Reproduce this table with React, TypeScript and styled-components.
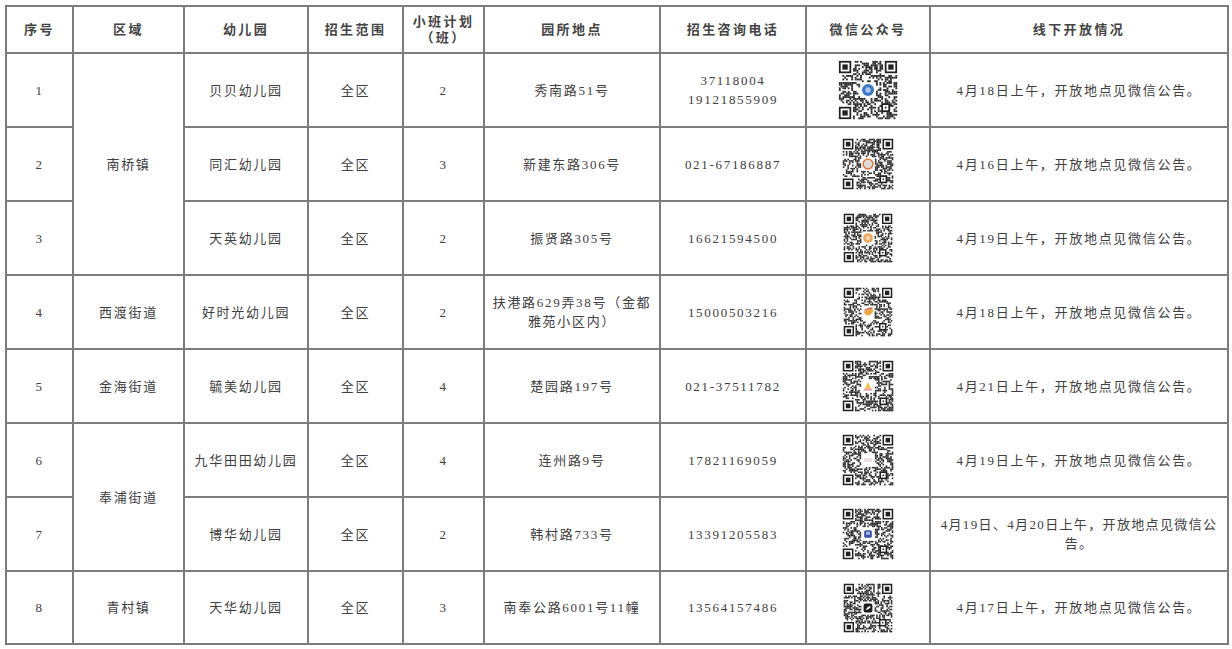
import React from "react";
import styled, { createGlobalStyle } from "styled-components";

const GlobalStyle = createGlobalStyle`
  html, body {
    margin: 0;
    padding: 0;
    background: #ffffff;
  }
  body {
    font-family: "Liberation Serif", "Noto Sans CJK SC", serif;
    color: #3d3d3d;
  }
`;

const Page = styled.div`
  width: 1232px;
  height: 649px;
  padding: 5px 0 0 5px;
  box-sizing: border-box;
  overflow: hidden;
`;

const Table = styled.table`
  width: 1222px;
  border-collapse: collapse;
  table-layout: fixed;
  border: 2px solid #7c7c7c;
`;

const HeadRow = styled.tr`
  height: 47px;
`;

const BodyRow = styled.tr<{ $last?: boolean }>`
  height: ${(p) => (p.$last ? "73px" : "74px")};
`;

const Th = styled.th`
  border: 2px solid #7c7c7c;
  padding: 0 2px;
  font-size: 13px;
  font-weight: 700;
  letter-spacing: 2.4px;
  line-height: 16px;
  color: #444;
  text-align: center;
  vertical-align: middle;
`;

const Td = styled.td<{ $tight?: boolean; $dense?: boolean }>`
  border: 2px solid #7c7c7c;
  padding: ${(p) => (p.$tight ? "0 1px" : "0 4px")};
  font-size: 13px;
  font-weight: 400;
  letter-spacing: ${(p) => (p.$dense ? "1.35px" : "1.7px")};
  white-space: ${(p) => (p.$dense ? "nowrap" : "normal")};
  line-height: 19px;
  color: #404040;
  text-align: center;
  vertical-align: middle;
`;

const QrBox = styled.div`
  display: flex;
  justify-content: center;
  align-items: center;
`;

const QrSvg = styled.svg`
  display: block;
  filter: blur(0.3px);
`;

type Logo = "blueCircle" | "orangeRing" | "orangeDot" | "duck" | "yellow" | "white" | "blueSquare" | "black";

function rng(seed: number) {
  let s = seed * 7919 + 13;
  return () => {
    s = (s * 16807) % 2147483647;
    return (s - 1) / 2147483646;
  };
}

const N = 33;
const C = (N - 1) / 2;

function QrCode({ size, seed, logo }: { size: number; seed: number; logo: Logo }) {
  const rand = rng(seed);
  const cells: React.ReactNode[] = [];
  const inFinder = (r: number, c: number) =>
    (r < 8 && c < 8) || (r < 8 && c >= N - 8) || (r >= N - 8 && c < 8);
  const inLogo = (r: number, c: number) => Math.abs(r - C) <= 4 && Math.abs(c - C) <= 4;
  for (let r = 0; r < N; r++) {
    for (let c = 0; c < N; c++) {
      const v = rand();
      if (inFinder(r, c) || inLogo(r, c)) continue;
      if (v < 0.5) cells.push(<rect key={`${r}-${c}`} x={c} y={r} width={1.05} height={1.05} />);
    }
  }
  const finder = (x: number, y: number) => (
    <g key={`f${x}${y}`}>
      <rect x={x} y={y} width={7} height={7} fill="#222" />
      <rect x={x + 1} y={y + 1} width={5} height={5} fill="#fff" />
      <rect x={x + 2} y={y + 2} width={3} height={3} fill="#222" />
    </g>
  );
  const logoNode = () => {
    switch (logo) {
      case "blueCircle":
        return (
          <g>
            <circle cx={C + 0.5} cy={C + 0.5} r={4} fill="#fff" />
            <circle cx={C + 0.5} cy={C + 0.5} r={3.4} fill="#3f78c8" />
            <circle cx={C + 0.5} cy={C + 0.5} r={1.5} fill="#a9c8ee" />
          </g>
        );
      case "orangeRing":
        return (
          <g>
            <circle cx={C + 0.5} cy={C + 0.5} r={4} fill="#fff" />
            <circle cx={C + 0.5} cy={C + 0.5} r={3.2} fill="#dcdcdc" stroke="#ec6a2c" strokeWidth={0.9} />
          </g>
        );
      case "orangeDot":
        return (
          <g>
            <circle cx={C + 0.5} cy={C + 0.5} r={4} fill="#fff" />
            <circle cx={C + 0.5} cy={C + 0.5} r={3.3} fill="#f0a860" />
            <circle cx={C + 0.5} cy={C + 0.5} r={1.6} fill="#f7d5a6" />
          </g>
        );
      case "duck":
        return (
          <g transform={`translate(${C - 3.5} ${C - 3.5})`}>
            <rect x={0} y={0} width={8} height={8} fill="#fff" />
            <path d="M1 4 Q4 9 7.4 3.6 L7 1 Q4.5 2.6 1 4 Z" fill="#f2a53a" />
            <path d="M1.6 2.6 Q4.2 0.8 7 1 L6.4 2 Q4.3 1.9 1.6 3.5 Z" fill="#e25a4a" />
          </g>
        );
      case "yellow":
        return (
          <g transform={`translate(${C - 3.5} ${C - 3.5})`}>
            <rect x={0} y={0} width={8} height={8} fill="#fff" />
            <path d="M1.5 6.8 L4 1.4 L6.5 6.8 Z" fill="#f3c242" />
            <rect x={1.2} y={5.8} width={5.6} height={1.2} fill="#e7a0b8" />
          </g>
        );
      case "white":
        return (
          <g transform={`translate(${C - 3.5} ${C - 3.5})`}>
            <rect x={0} y={0} width={8} height={8} fill="#fff" />
            <rect x={1.3} y={2.6} width={5.4} height={2.8} rx={0.5} fill="#ebe3e3" />
          </g>
        );
      case "blueSquare":
        return (
          <g transform={`translate(${C - 3.5} ${C - 3.5})`}>
            <rect x={0} y={0} width={8} height={8} fill="#fff" />
            <rect x={1.5} y={1.5} width={5} height={5} rx={1.1} fill="#3c4fa8" />
            <rect x={2.7} y={2.5} width={2.6} height={2} fill="#a4b6e6" />
          </g>
        );
      case "black":
        return (
          <g transform={`translate(${C - 3.5} ${C - 3.5})`}>
            <rect x={0} y={0} width={8} height={8} fill="#fff" />
            <rect x={1} y={1} width={6} height={6} rx={1.3} fill="#1c1c1c" />
            <path d="M2.4 5.6 Q4 2 6 3 Q5 5 2.4 5.6 Z" fill="#fff" />
          </g>
        );
    }
  };
  return (
    <QrSvg width={size} height={size} viewBox={`-0.5 -0.5 ${N + 1} ${N + 1}`}>
      <rect x={-0.5} y={-0.5} width={N + 1} height={N + 1} fill="#fff" />
      <g fill="#2a2a2a">{cells}</g>
      {finder(0, 0)}
      {finder(N - 7, 0)}
      {finder(0, N - 7)}
      <rect x={N - 9} y={N - 9} width={5} height={5} fill="#222" />
      <rect x={N - 8} y={N - 8} width={3} height={3} fill="#fff" />
      <rect x={N - 7} y={N - 7} width={1} height={1} fill="#222" />
      {logoNode()}
    </QrSvg>
  );
}

type Row = {
  no: number;
  area?: { name: string; span: number };
  school: string;
  plan: number;
  address: React.ReactNode;
  phone: React.ReactNode;
  qr: { size: number; seed: number; logo: Logo };
  open: React.ReactNode;
  dense?: boolean;
};

const rows: Row[] = [
  {
    no: 1,
    area: { name: "南桥镇", span: 3 },
    school: "贝贝幼儿园",
    plan: 2,
    address: "秀南路51号",
    phone: (
      <>
        37118004
        <br />
        19121855909
      </>
    ),
    qr: { size: 60, seed: 11, logo: "blueCircle" },
    open: "4月18日上午，开放地点见微信公告。",
  },
  {
    no: 2,
    school: "同汇幼儿园",
    plan: 3,
    address: "新建东路306号",
    phone: "021-67186887",
    qr: { size: 52, seed: 23, logo: "orangeRing" },
    open: "4月16日上午，开放地点见微信公告。",
  },
  {
    no: 3,
    school: "天英幼儿园",
    plan: 2,
    address: "振贤路305号",
    phone: "16621594500",
    qr: { size: 50, seed: 37, logo: "orangeDot" },
    open: "4月19日上午，开放地点见微信公告。",
  },
  {
    no: 4,
    area: { name: "西渡街道", span: 1 },
    school: "好时光幼儿园",
    plan: 2,
    address: (
      <>
        扶港路629弄38号（金都
        <br />
        雅苑小区内）
      </>
    ),
    phone: "15000503216",
    qr: { size: 50, seed: 41, logo: "duck" },
    open: "4月18日上午，开放地点见微信公告。",
  },
  {
    no: 5,
    area: { name: "金海街道", span: 1 },
    school: "毓美幼儿园",
    plan: 4,
    address: "楚园路197号",
    phone: "021-37511782",
    qr: { size: 52, seed: 53, logo: "yellow" },
    open: "4月21日上午，开放地点见微信公告。",
  },
  {
    no: 6,
    area: { name: "奉浦街道", span: 2 },
    school: "九华田田幼儿园",
    plan: 4,
    address: "连州路9号",
    phone: "17821169059",
    qr: { size: 52, seed: 67, logo: "white" },
    open: "4月19日上午，开放地点见微信公告。",
  },
  {
    no: 7,
    school: "博华幼儿园",
    plan: 2,
    address: "韩村路733号",
    phone: "13391205583",
    qr: { size: 52, seed: 79, logo: "blueSquare" },
    open: (
      <>
        4月19日、4月20日上午，开放地点见微信公
        <br />
        告。
      </>
    ),
    dense: true,
  },
  {
    no: 8,
    area: { name: "青村镇", span: 1 },
    school: "天华幼儿园",
    plan: 3,
    address: "南奉公路6001号11幢",
    phone: "13564157486",
    qr: { size: 50, seed: 97, logo: "black" },
    open: "4月17日上午，开放地点见微信公告。",
  },
];

const widths = [67, 111, 124, 95, 81, 176, 146, 124, 298];

export default function App() {
  return (
    <Page>
      <GlobalStyle />
      <Table>
        <colgroup>
          {widths.map((w, i) => (
            <col key={i} style={{ width: w }} />
          ))}
        </colgroup>
        <thead>
          <HeadRow>
            <Th>序号</Th>
            <Th>区域</Th>
            <Th>幼儿园</Th>
            <Th>招生范围</Th>
            <Th>
              小班计划
              <br />
              （班）
            </Th>
            <Th>园所地点</Th>
            <Th>招生咨询电话</Th>
            <Th>微信公众号</Th>
            <Th>线下开放情况</Th>
          </HeadRow>
        </thead>
        <tbody>
          {rows.map((r, i) => (
            <BodyRow key={r.no} $last={i === rows.length - 1}>
              <Td>{r.no}</Td>
              {r.area && <Td rowSpan={r.area.span}>{r.area.name}</Td>}
              <Td>{r.school}</Td>
              <Td>全区</Td>
              <Td>{r.plan}</Td>
              <Td>{r.address}</Td>
              <Td>{r.phone}</Td>
              <Td>
                <QrBox>
                  <QrCode {...r.qr} />
                </QrBox>
              </Td>
              <Td $tight $dense={r.dense}>
                {r.open}
              </Td>
            </BodyRow>
          ))}
        </tbody>
      </Table>
    </Page>
  );
}
